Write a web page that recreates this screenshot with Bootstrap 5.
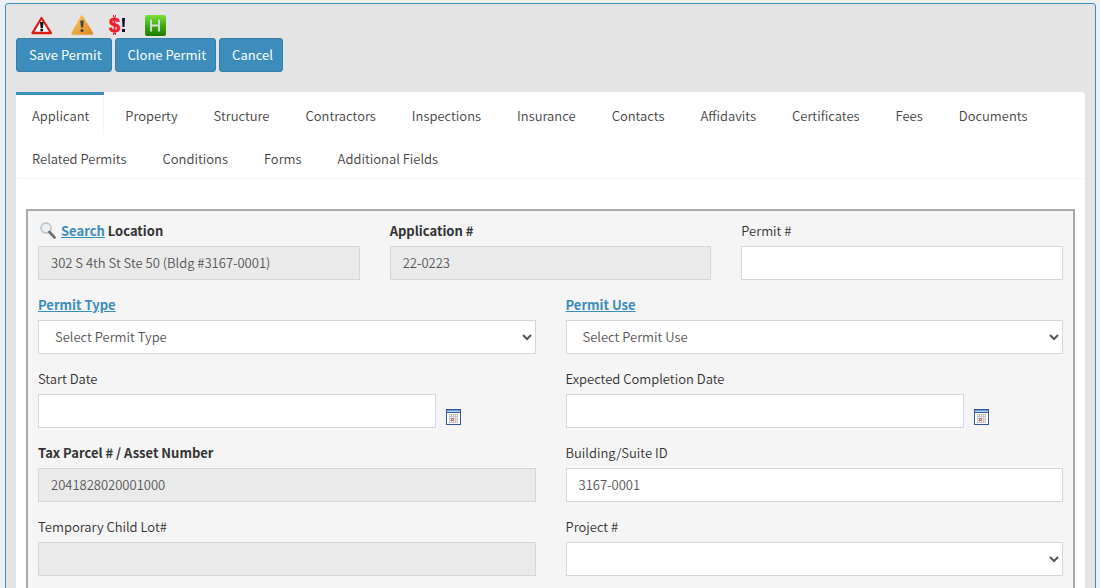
<!DOCTYPE html>
<html lang="en">
<head>
<meta charset="utf-8">
<meta name="viewport" content="width=device-width, initial-scale=1">
<title>Permit</title>
<link href="https://cdn.jsdelivr.net/npm/bootstrap@5.3.0/dist/css/bootstrap.min.css" rel="stylesheet">
<style>
  body { background: #ecf0f5; color: #333; font: 13px/20px "Source Sans Pro", "Noto Sans CJK SC", sans-serif; font-weight: 350; }
  .permit-shell { margin: 3px 4px 0 5px; padding: 10px; background: #e4e4e4; border: 1px solid #3c8dbc; border-radius: 3px; }
  .alert-icons { padding: 0 15px; height: 24px; }
  .button-line { gap: 3px; }
  .btn-permit { --bs-btn-color: #fff; --bs-btn-bg: #3c8dbc; --bs-btn-border-color: #367fa9; --bs-btn-hover-color: #fff; --bs-btn-hover-bg: #367fa9; --bs-btn-font-size: 13px; --bs-btn-line-height: 20px; --bs-btn-border-radius: 3px; padding: 6px 9px 6px 12px; font-weight: 400; }
  .permit-tabs { margin-top: 20px; background: #fff; border-radius: 3px; }
  .permit-tabs .nav { border-bottom: 1px solid #f4f4f4; }
  .permit-tabs .nav-item { border-top: 3px solid transparent; margin-right: 5px; }
  .permit-tabs .nav-item.current { border-top-color: #3c8dbc; }
  .permit-tabs .nav-link { padding: 11px 14px 9px 15px; font-size: 13px; font-weight: inherit; color: #444; border: solid transparent; border-width: 0 1px; border-radius: 0; }
  .permit-tabs .current .nav-link { border-right-color: #f4f4f4; }
  .permit-fields { margin: 30px 10px 10px; padding: 10px; background: #f5f5f5; border: 2px solid #a9a9a9; }
  .permit-fields .row { --bs-gutter-x: 30px; margin-bottom: 15px; }
  .permit-fields label, .field-title { display: block; margin-bottom: 5px; line-height: 20px; }
  .permit-fields a { color: #3c8dbc; font-weight: 700; }
  .permit-fields .form-control { height: 34px; padding: 5px 12px 7px; font-size: 13px; font-weight: inherit; line-height: 20px; color: #555; background: #fff; border: 1px solid #d2d6de; border-radius: 0; }
  .permit-fields .form-control[readonly] { background: #eaeaea; }
  .permit-fields select.form-control { appearance: auto; }
  .date-line { gap: 10px; }
  .date-line .form-control { width: 80%; }
  .date-btn { padding: 0; border: 0; background: none; margin-top: 15px; height: 16px; line-height: 0; }
</style>
</head>
<body>
<svg class="d-none">
  <symbol id="calendar" viewBox="0 0 16 16">
    <path fill="#3057a0" d="M0 0h15v16H0z"/><path fill="#6d95cb" d="M1 1h13v1H1z"/><path fill="#c3d4ee" d="M1 2h13v1H1z"/><path fill="#fff" d="M1 4h13v11H1z"/>
    <path fill="#c6c6c6" d="M3 5h9v9H3z"/>
    <path fill="#fff" d="M4 6h1v1H4zM6 6h1v1H6zM8 6h1v1H8zM10 6h1v1h-1zM4 8h1v1H4zM6 8h1v1H6zM8 8h1v1H8zM10 8h1v1h-1zM4 10h1v1H4zM8 10h1v1H8zM10 10h1v1h-1zM4 12h1v1H4zM6 12h1v1H6zM8 12h1v1H8zM10 12h1v1h-1z"/>
    <path fill="none" stroke="#d9705a" d="M5.500 9.500h2v2h-2z"/>
  </symbol>
</svg>
<main class="permit-shell">
  <div class="alert-icons d-flex">
    <svg width="40" height="24" viewBox="0 0 40 24" role="img" aria-label="Alert">
      <defs><linearGradient id="amber" x2="1" y2="1"><stop stop-color="#fbc966"/><stop offset="1" stop-color="#e08a1e"/></linearGradient>
      <linearGradient id="green" x2="0" y2="1"><stop stop-color="#7be03c"/><stop offset=".5" stop-color="#3fae12"/><stop offset="1" stop-color="#1c7a05"/></linearGradient></defs>
      <path d="M10.500 4 1.500 19h18.500z" fill="#fff" stroke="#d91d12" stroke-width="2.300" stroke-linejoin="round"/>
      <path d="M9 8h3.500l-.6 6H9.600z" fill="#111"/><circle cx="10.700" cy="16" r="1.500" fill="#111"/>
    </svg>
    <svg width="37" height="24" viewBox="0 0 37 24" role="img" aria-label="Warning">
      <path d="M10.800 2.500 1.500 19.500h19.500z" fill="url(#amber)" stroke="url(#amber)" stroke-width="2.500" stroke-linejoin="round"/>
      <path d="M9.300 6.500h3.500l-.7 7H10z" fill="#444"/><circle cx="11" cy="16.500" r="1.600" fill="#444"/>
    </svg>
    <svg width="37" height="24" viewBox="0 0 37 24" role="img" aria-label="Fees due" font-family="Liberation Sans, sans-serif" font-weight="700">
      <text x="1" y="18" font-size="20" fill="#ed1c2e" stroke="#ed1c2e" stroke-width=".6">$</text><path fill="#ed1c2e" d="M5 1h1v2H5zM7 1h1v2H7zM5 19h1v2H5zM7 19h1v2H7z"/>
      <path fill="#0a0a32" d="M14 4h3l-.5 9h-2zM14 15h3v3h-3z"/>
    </svg>
    <svg width="24" height="24" viewBox="0 0 24 24" role="img" aria-label="Hold">
      <rect y="1" width="21" height="21" rx="2" fill="url(#green)"/>
      <path d="M6 5.500v12M14 5.500v12M6 11.500h8" fill="none" stroke="#ddd" stroke-width="1.800"/>
    </svg>
  </div>
  <div class="button-line d-flex">
    <button type="button" class="btn btn-permit">Save Permit</button>
    <button type="button" class="btn btn-permit">Clone Permit</button>
    <button type="button" class="btn btn-permit">Cancel</button>
  </div>
  <section class="permit-tabs">
    <ul class="nav">
      <li class="nav-item current"><a class="nav-link" aria-current="page" href="#">Applicant</a></li>
      <li class="nav-item"><a class="nav-link" href="#">Property</a></li>
      <li class="nav-item"><a class="nav-link" href="#">Structure</a></li>
      <li class="nav-item"><a class="nav-link" href="#">Contractors</a></li>
      <li class="nav-item"><a class="nav-link" href="#">Inspections</a></li>
      <li class="nav-item"><a class="nav-link" href="#">Insurance</a></li>
      <li class="nav-item"><a class="nav-link" href="#">Contacts</a></li>
      <li class="nav-item"><a class="nav-link" href="#">Affidavits</a></li>
      <li class="nav-item"><a class="nav-link" href="#">Certificates</a></li>
      <li class="nav-item"><a class="nav-link" href="#">Fees</a></li>
      <li class="nav-item"><a class="nav-link" href="#">Documents</a></li>
      <li class="nav-item"><a class="nav-link" href="#">Related Permits</a></li>
      <li class="nav-item"><a class="nav-link" href="#">Conditions</a></li>
      <li class="nav-item"><a class="nav-link" href="#">Forms</a></li>
      <li class="nav-item"><a class="nav-link" href="#">Additional Fields</a></li>
    </ul>
    <div class="pb-1">
    <form class="permit-fields">
      <div class="row">
        <div class="col-4">
          <div class="field-title d-flex">
            <svg width="19" height="20" viewBox="0 0 19 20" class="me-1" aria-hidden="true">
              <circle cx="8" cy="7" r="5" fill="#eef1f3" stroke="#c3c8cc" stroke-width="1.800"/>
              <path d="m11.500 11 5 5.500" stroke="#6e7278" stroke-width="2.800" stroke-linecap="round"/>
            </svg>
            <a href="#">Search</a>&nbsp;<label for="location" class="fw-bold mb-0">Location</label>
          </div>
          <input class="form-control" id="location" value="302 S 4th St Ste 50 (Bldg #3167-0001)" readonly>
        </div>
        <div class="col-4">
          <label for="application" class="fw-bold">Application #</label>
          <input class="form-control" id="application" value="22-0223" readonly>
        </div>
        <div class="col-4">
          <label for="permit">Permit #</label>
          <input class="form-control" id="permit">
        </div>
      </div>
      <div class="row">
        <div class="col-6">
          <label for="type"><a href="#">Permit Type</a></label>
          <select class="form-control" id="type"><option>Select Permit Type</option></select>
        </div>
        <div class="col-6">
          <label for="use"><a href="#">Permit Use</a></label>
          <select class="form-control" id="use"><option>Select Permit Use</option></select>
        </div>
      </div>
      <div class="row">
        <div class="col-6">
          <label for="start">Start Date</label>
          <div class="date-line d-flex">
            <input class="form-control" id="start">
            <button type="button" class="date-btn" aria-label="Pick start date"><svg width="16" height="16"><use href="#calendar"/></svg></button>
          </div>
        </div>
        <div class="col-6">
          <label for="completion">Expected Completion Date</label>
          <div class="date-line d-flex">
            <input class="form-control" id="completion">
            <button type="button" class="date-btn" aria-label="Pick completion date"><svg width="16" height="16"><use href="#calendar"/></svg></button>
          </div>
        </div>
      </div>
      <div class="row">
        <div class="col-6">
          <label for="parcel" class="fw-bold">Tax Parcel # / Asset Number</label>
          <input class="form-control" id="parcel" value="2041828020001000" readonly>
        </div>
        <div class="col-6">
          <label for="building">Building/Suite ID</label>
          <input class="form-control" id="building" value="3167-0001">
        </div>
      </div>
      <div class="row">
        <div class="col-6">
          <label for="childlot">Temporary Child Lot#</label>
          <input class="form-control" id="childlot" readonly>
        </div>
        <div class="col-6">
          <label for="project">Project #</label>
          <select class="form-control" id="project"><option></option></select>
        </div>
      </div>
    </form>
    </div>
  </section>
</main>
<script src="https://cdn.jsdelivr.net/npm/bootstrap@5.3.0/dist/js/bootstrap.bundle.min.js"></script>
</body>
</html>
